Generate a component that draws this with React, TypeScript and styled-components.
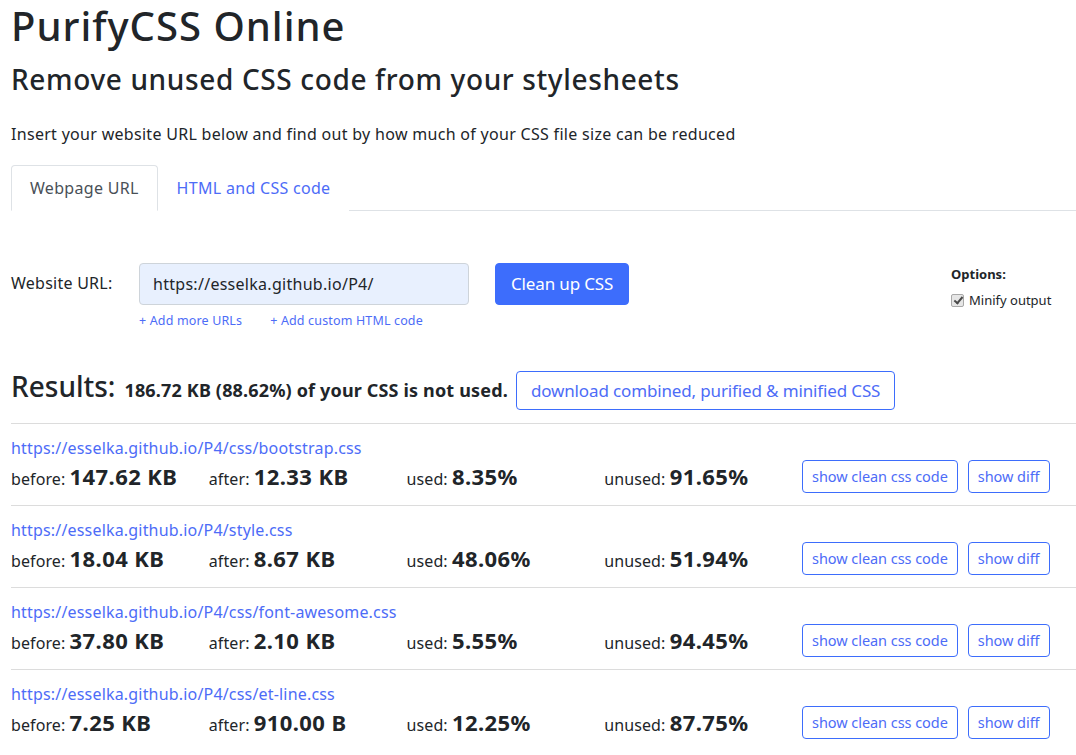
import React from "react";
import styled, { createGlobalStyle } from "styled-components";

const GlobalStyle = createGlobalStyle`
  html, body { margin: 0; padding: 0; background: #fff; }
  body {
    font-family: "Segoe UI", "Noto Sans", "Open Sans", sans-serif;
    color: #212529;
    font-size: 16px;
    line-height: 1.5;
  }
  * { box-sizing: border-box; }
`;

const BLUE = "#3d6dfc";
const LINK = "#4d6cf7";

const Page = styled.div`
  padding: 0 11px;
`;

const Title = styled.h1`
  margin: 0;
  padding-top: 2px;
  font-size: 40px;
  font-weight: 500;
  line-height: 48px;
  letter-spacing: 1px;
`;

const Subtitle = styled.h3`
  margin: 12px 0 0;
  font-size: 28px;
  font-weight: 500;
  line-height: 34px;
  letter-spacing: 0.64px;
`;

const Intro = styled.p`
  margin: 26px 0 0;
  font-size: 16px;
  line-height: 24px;
  letter-spacing: 0.3px;
`;

const Tabs = styled.div`
  display: flex;
  margin: 19px -11px 0 0;
  border-bottom: 1px solid #dee2e6;
`;

const Tab = styled.a<{ $active?: boolean }>`
  display: block;
  padding: 10px 18px;
  line-height: 24px;
  font-size: 16px;
  letter-spacing: 0.3px;
  margin-bottom: -1px;
  border: 1px solid ${(p) => (p.$active ? "#dee2e6" : "transparent")};
  border-bottom-color: ${(p) => (p.$active ? "#fff" : "transparent")};
  border-radius: 4px 4px 0 0;
  background: #fff;
  color: ${(p) => (p.$active ? "#495057" : LINK)};
  text-decoration: none;
`;

const FormArea = styled.div`
  display: flex;
  align-items: flex-start;
  margin-top: 52px;
`;

const FieldLabel = styled.label`
  width: 128px;
  font-size: 16px;
  line-height: 24px;
  letter-spacing: 0.25px;
  padding-top: 8px;
`;

const FieldCol = styled.div`
  display: flex;
  flex-direction: column;
`;

const InputRow = styled.div`
  display: flex;
  gap: 26px;
`;

const UrlInput = styled.input`
  width: 330px;
  height: 42px;
  padding: 0 13px;
  font: inherit;
  font-size: 16px;
  letter-spacing: 0.28px;
  color: #212529;
  background: #e8f0fe;
  border: 1px solid #ced4da;
  border-radius: 4px;
  outline: none;
`;

const PrimaryButton = styled.button`
  height: 42px;
  padding: 0 15px;
  font: inherit;
  font-size: 17px;
  letter-spacing: -0.15px;
  color: #fff;
  background: ${BLUE};
  border: 1px solid ${BLUE};
  border-radius: 4px;
`;

const SmallLinks = styled.div`
  display: flex;
  gap: 28px;
  margin-top: 7px;
`;

const SmallLink = styled.a`
  font-size: 12.5px;
  line-height: 18px;
  letter-spacing: 0.15px;
  color: ${LINK};
  text-decoration: none;
`;

const Options = styled.div`
  margin-left: auto;
  width: 114px;
  padding-top: 1px;
  font-size: 13px;
`;

const OptionsTitle = styled.div`
  font-weight: 700;
  line-height: 20px;
`;

const CheckLabel = styled.label`
  display: flex;
  align-items: center;
  gap: 5px;
  margin-top: 7px;
  line-height: 18px;
`;

const Check = styled.input`
  appearance: none;
  position: relative;
  margin: 0;
  width: 13px;
  height: 13px;
  background: #e6e6e6;
  border: 1px solid #a8a8a8;
  border-radius: 2px;
  &::after {
    content: "";
    position: absolute;
    left: 3.5px;
    top: 0.5px;
    width: 3px;
    height: 7px;
    border: solid #4a4a4a;
    border-width: 0 2px 2px 0;
    transform: rotate(40deg);
  }
`;

const ResultsHead = styled.div`
  display: flex;
  align-items: baseline;
  margin-top: 39px;
  padding-bottom: 13px;
  border-bottom: 1px solid #dcdcdc;
  margin-right: -11px;
`;

const ResultsTitle = styled.span`
  font-size: 28px;
  font-weight: 500;
  line-height: 34px;
  margin-right: 9px;
`;

const ResultsSummary = styled.span`
  font-size: 18px;
  font-weight: 700;
  letter-spacing: 0.16px;
  margin-right: 8px;
`;

const OutlineButton = styled.button<{ $size?: "lg" | "sm" }>`
  font: inherit;
  font-size: ${(p) => (p.$size === "lg" ? "17px" : "14.5px")};
  letter-spacing: ${(p) => (p.$size === "lg" ? "-0.14px" : "-0.05px")};
  height: ${(p) => (p.$size === "lg" ? "39px" : "33px")};
  padding: ${(p) => (p.$size === "lg" ? "0 14px" : "0 9px")};
  color: ${LINK};
  background: #fff;
  border: 1px solid ${BLUE};
  border-radius: 4px;
  white-space: nowrap;
`;

const FileRow = styled.div`
  padding: 12px 0 12px;
  border-bottom: 1px solid #dcdcdc;
  margin-right: -11px;
  &:last-child { border-bottom: none; }
`;

const FileLink = styled.a`
  display: block;
  font-size: 16px;
  line-height: 24px;
  letter-spacing: 0.18px;
  color: ${LINK};
  text-decoration: none;
`;

const Stats = styled.div`
  display: grid;
  grid-template-columns: repeat(4, 197.75px) auto;
  align-items: center;
  height: 33px;
`;

const Stat = styled.div`
  font-size: 16px;
  letter-spacing: 0.1px;
  white-space: nowrap;
`;

const StatValue = styled.strong`
  font-size: 22px;
  font-weight: 700;
  letter-spacing: 0.4px;
`;

const RowButtons = styled.div`
  display: flex;
  gap: 10px;
`;

const files = [
  { url: "https://esselka.github.io/P4/css/bootstrap.css", before: "147.62 KB", after: "12.33 KB", used: "8.35%", unused: "91.65%" },
  { url: "https://esselka.github.io/P4/style.css", before: "18.04 KB", after: "8.67 KB", used: "48.06%", unused: "51.94%" },
  { url: "https://esselka.github.io/P4/css/font-awesome.css", before: "37.80 KB", after: "2.10 KB", used: "5.55%", unused: "94.45%" },
  { url: "https://esselka.github.io/P4/css/et-line.css", before: "7.25 KB", after: "910.00 B", used: "12.25%", unused: "87.75%" },
];

export default function App() {
  return (
    <>
      <GlobalStyle />
      <Page>
        <Title>PurifyCSS Online</Title>
        <Subtitle>Remove unused CSS code from your stylesheets</Subtitle>
        <Intro>
          Insert your website URL below and find out by how much of your CSS file size can be reduced
        </Intro>
        <Tabs>
          <Tab $active>Webpage URL</Tab>
          <Tab href="#">HTML and CSS code</Tab>
        </Tabs>
        <FormArea>
          <FieldLabel>Website URL:</FieldLabel>
          <FieldCol>
            <InputRow>
              <UrlInput defaultValue="https://esselka.github.io/P4/" />
              <PrimaryButton>Clean up CSS</PrimaryButton>
            </InputRow>
            <SmallLinks>
              <SmallLink href="#">+ Add more URLs</SmallLink>
              <SmallLink href="#">+ Add custom HTML code</SmallLink>
            </SmallLinks>
          </FieldCol>
          <Options>
            <OptionsTitle>Options:</OptionsTitle>
            <CheckLabel>
              <Check type="checkbox" defaultChecked />
              Minify output
            </CheckLabel>
          </Options>
        </FormArea>
        <ResultsHead>
          <ResultsTitle>Results:</ResultsTitle>
          <ResultsSummary>186.72 KB (88.62%) of your CSS is not used.</ResultsSummary>
          <OutlineButton $size="lg">download combined, purified &amp; minified CSS</OutlineButton>
        </ResultsHead>
        {files.map((f) => (
          <FileRow key={f.url}>
            <FileLink href="#">{f.url}</FileLink>
            <Stats>
              <Stat>before: <StatValue>{f.before}</StatValue></Stat>
              <Stat>after: <StatValue>{f.after}</StatValue></Stat>
              <Stat>used: <StatValue>{f.used}</StatValue></Stat>
              <Stat>unused: <StatValue>{f.unused}</StatValue></Stat>
              <RowButtons>
                <OutlineButton>show clean css code</OutlineButton>
                <OutlineButton>show diff</OutlineButton>
              </RowButtons>
            </Stats>
          </FileRow>
        ))}
      </Page>
    </>
  );
}
